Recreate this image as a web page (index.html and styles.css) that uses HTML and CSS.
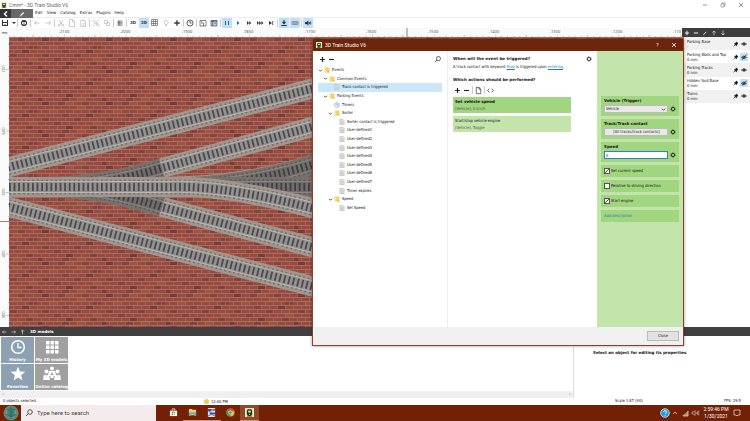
FILE: index.html
```html
<!DOCTYPE html>
<html lang="en">
<head>
<meta charset="utf-8">
<title>3D Train Studio V6</title>
<link rel="stylesheet" href="styles.css">
</head>
<body>
<svg class="defs" aria-hidden="true">
  <symbol id="i-plus" viewBox="0 0 10 10"><path d="M5 2.300v5.400M2.300 5h5.400" stroke-width="1.300"/></symbol>
  <symbol id="i-minus" viewBox="0 0 10 10"><path d="M2.300 5h5.400" stroke-width="1.300"/></symbol>
  <symbol id="i-pen" viewBox="0 0 10 10"><path d="M3.500 6.700L6.700 3.500" stroke-width="1.200"/><path d="M3 7.500l.7-1"/></symbol>
  <symbol id="i-left" viewBox="0 0 10 10"><path d="M7.500 5H2.500M4.300 3.200L2.500 5l1.800 1.800"/></symbol>
  <symbol id="i-right" viewBox="0 0 10 10"><path d="M2.500 5h5M5.700 3.200L7.500 5 5.700 6.800"/></symbol>
  <symbol id="i-up" viewBox="0 0 10 10"><path d="M5 8V2.500M3 4.500l2-2 2 2"/></symbol>
  <symbol id="i-down" viewBox="0 0 10 10"><path d="M5 2v5.500M3 5.500l2 2 2-2"/></symbol>
  <symbol id="i-x" viewBox="0 0 10 10"><path d="M3 3l4 4M7 3L3 7"/></symbol>
  <symbol id="i-gear" viewBox="0 0 10 10"><circle cx="5" cy="5" r="2.700" stroke-width="1.300"/><circle cx="5" cy="5" r="3.900" stroke-width=".9" stroke-dasharray="1.500 1.560"/></symbol>
  <symbol id="i-search" viewBox="0 0 10 10"><circle cx="6" cy="4" r="2.300"/><path d="M4.300 5.700L2 8"/></symbol>
  <symbol id="i-clock" viewBox="0 0 10 10"><circle cx="5" cy="5" r="3"/><path d="M5 3v2h1.600"/></symbol>
  <symbol id="i-grid" viewBox="0 0 10 10"><path d="M1.500 1.500h6v6h-6zM3.500 1.500v6M5.500 1.500v6M1.500 3.500h6M1.500 5.500h6" stroke="#777" stroke-width=".8"/></symbol>
  <symbol id="i-doc" viewBox="0 0 10 10"><path d="M2.500 1.500h3l2 2v5h-5zM5.500 1.500v2h2" stroke-width=".7"/></symbol>
  <symbol id="i-folder" viewBox="0 0 10 10"><path d="M1 1h7l1 1v7H1z" fill="#f5d269" stroke="none"/><path d="M1 1h2v8H1z" fill="#fbe7a0" stroke="none"/><path d="M6 7h3v2H6z" fill="#e6b845" stroke="none"/></symbol>
  <symbol id="i-file" viewBox="0 0 10 10"><path d="M1.500.500h5l2 2v7h-7z" fill="#e4e4e4" stroke="#a3a8a8" stroke-width=".8"/><path d="M3 4h4M3 6h4M3 8h4" stroke="#aaa" stroke-width=".6"/></symbol>
  <symbol id="i-caret" viewBox="0 0 10 10"><path d="M2 3.500l3 3 3-3" stroke-width="1.400"/></symbol>
  <symbol id="i-pin" viewBox="0 0 10 10"><path d="M5.500 2.500l2 2-1.500 1-.5 1.700L3 4.800l1.500-.6z" fill="currentColor"/><path d="M4 6L2 8"/></symbol>
  <symbol id="i-eye" viewBox="0 0 10 10"><path d="M1.700 5q3.300-3.600 6.600 0Q5 8.600 1.700 5z"/><circle cx="5" cy="5" r="1" fill="currentColor"/></symbol>
  <symbol id="i-hidden" viewBox="0 0 10 10"><path d="M1.700 5.500q3-3.600 6.300 0Q5 8.600 1.700 5.500zM2.500 8.500L8 2"/><circle cx="5" cy="5.500" r="1"/></symbol>
  <symbol id="i-app" viewBox="0 0 10 10"><path d="M0 0h10v10H0z" fill="#e3efb8" stroke="none"/><path d="M3 1.500h4L8 3v4L7 8l1 1.500H2L3 8 2 7V3z" fill="#26331d" stroke="none"/><path d="M3.500 3h3v2h-3z" fill="#dfe9bd" stroke="none"/><circle cx="5" cy="7" r=".7" fill="#e7d762" stroke="none"/></symbol>
</svg>

<header class="titlebar">
  <svg class="app-icon"><use href="#i-app"/></svg>
  <span class="grow">Cmm* - 3D Train Studio V6</span>
  <button class="win" aria-label="Minimize"><svg viewBox="0 0 10 10"><path d="M3 5h4"/></svg></button>
  <button class="win" aria-label="Restore"><svg viewBox="0 0 10 10"><path d="M3 4h3v3H3zM4 4V3h3v3H6" stroke-width=".6"/></svg></button>
  <button class="win" aria-label="Close window"><svg><use href="#i-x"/></svg></button>
</header>

<nav class="menubar">
  <button class="back" aria-label="Back"><svg viewBox="0 0 10 10"><path d="M6 2.500L3.500 5 6 7.500" stroke-width="1.400"/></svg></button>
  <button class="mode" aria-label="Edit mode"><svg><use href="#i-pen"/></svg></button>
  <div class="menus"><button>Edit</button><button>View</button><button>Catalog</button><button>Extras</button><button>Plugins</button><button>Help</button></div>
</nav>

<div class="toolbar">
  <button aria-label="Save"><svg viewBox="0 0 10 10"><path d="M2.500 2v5.500h5V2" stroke-width="1.100"/><path d="M3 4.500h4" stroke-width="1"/><path d="M5 6v1.500"/></svg></button>
  <button class="narrow" aria-label="Save options"><svg viewBox="0 0 10 10"><path d="M3 4l2 2 2-2z" fill="currentColor" stroke="none"/></svg></button>
  <i></i>
  <button aria-label="Publish"><svg viewBox="0 0 10 10"><circle cx="5" cy="5" r="2.700" stroke-width="1"/><path d="M3 3.600h4" stroke-width="1.200"/><path d="M3.800 7.500V6h2.400v1.500"/></svg></button>
  <i></i>
  <button class="off" aria-label="Undo"><svg><use href="#i-left"/></svg></button>
  <button class="off" aria-label="Redo"><svg><use href="#i-right"/></svg></button>
  <i></i>
  <button class="off" aria-label="Cut"><svg viewBox="0 0 10 10"><path d="M3 2l3.500 5M7 2L3.500 7"/><circle cx="3" cy="7.300" r=".8"/><circle cx="7" cy="7.300" r=".8"/></svg></button>
  <button class="off" aria-label="Copy"><svg><use href="#i-doc"/></svg></button>
  <button class="off" aria-label="Paste"><svg viewBox="0 0 10 10"><path d="M2.500 2.500h5v6h-5zM4 2h2M5 5h2.500v3H5z" stroke-width=".6"/></svg></button>
  <i></i>
  <button class="off" aria-label="Group"><svg viewBox="0 0 10 10"><path d="M2 3.500V2h1.500M6.500 2H8v1.500M8 6.500V8H6.500M3.500 8H2V6.500M3.500 3.500h2v2h-2zM5 5h2v2H5z" stroke-width=".6"/></svg></button>
  <button class="off" aria-label="Ungroup"><svg viewBox="0 0 10 10"><path d="M2.500 2.500h3v3h-3zM4.500 4.500h3v3h-3z" stroke-width=".7"/></svg></button>
  <i></i>
  <button aria-label="List"><svg viewBox="0 0 10 10"><path d="M2.500 3h5M2.500 4.400h5M2.500 5.800h5M2.500 7.200h5M4 2.800v4.600" stroke-width=".6"/></svg></button>
  <i></i>
  <button>3D</button>
  <button class="on">2D</button>
  <button aria-label="Grid"><svg><use href="#i-grid"/></svg></button>
  <button class="off" aria-label="Light"><svg viewBox="0 0 10 10"><path d="M4 6.500Q2.500 5 3.500 3T6.500 3 6 6.500zM4 8h2"/></svg></button>
  <button aria-label="Add"><svg><use href="#i-plus"/></svg></button>
  <i></i>
  <button aria-label="Time"><svg><use href="#i-clock"/></svg></button>
  <i></i>
  <button aria-label="Window view"><svg viewBox="0 0 10 10"><path d="M2 2.500h6v5.500H2zM3 5h2.500v3M3 3.700h1" stroke-width=".6"/></svg></button>
  <button aria-label="Panel view"><svg viewBox="0 0 10 10"><path d="M2 2.500h6v5.500H2z" fill="#b8d6df" stroke-width=".6"/><path d="M2 3.200h6M3.800 3v5M5.300 5H7" stroke-width=".6"/></svg></button>
  <i></i>
  <button class="on" aria-label="Pause"><svg viewBox="0 0 10 10"><path d="M3.500 3v4M6.500 3v4" stroke="#246a9d" stroke-width="1"/></svg></button>
  <button aria-label="Play"><svg viewBox="0 0 10 10"><path d="M4 3l2.500 2L4 7z" fill="#146bb4" stroke="none"/></svg></button>
  <button aria-label="Fast"><svg viewBox="0 0 10 10"><path d="M3 3l2 2-2 2zM5.200 3l2 2-2 2z" fill="currentColor" stroke="none"/></svg></button>
  <button aria-label="Faster"><svg viewBox="0 0 10 10"><path d="M2 3l2 2-2 2zM4.200 3l2 2-2 2zM6.400 3l2 2-2 2z" fill="currentColor" stroke="none"/></svg></button>
  <button aria-label="Skip"><svg viewBox="0 0 10 10"><path d="M3 3l3 2-3 2z" fill="currentColor" stroke="none"/><path d="M6.700 3v4"/></svg></button>
  <i></i>
  <button class="on" aria-label="Snap to ground"><svg viewBox="0 0 10 10"><path d="M5 2v3.500M3.500 4L5 5.600 6.500 4M2.300 7.500h5.400" stroke-width="1.100"/></svg></button>
  <button class="on" aria-label="Snap tracks"><svg viewBox="0 0 10 10"><path d="M2 3.500h6v3H2zM2 5h6M4 3.500v3M6 3.500v3" stroke="#6b747b" stroke-width=".6"/></svg></button>
  <i></i>
  <button class="on" aria-label="Sound"><svg viewBox="0 0 10 10"><path d="M2 4h1.500L5.500 2.500v5L3.500 6H2z" fill="currentColor" stroke="none"/><path d="M6.500 4v2M7.700 3.500v3"/></svg></button>
</div>

<main class="workspace">
  <section class="scene" aria-label="Layout">
    <div class="unit">mm</div>
    <svg class="ruler-x" preserveAspectRatio="xMinYMin slice" viewBox="9 28 673 9">
      <defs><pattern id="tx" width="61.600" height="9" patternUnits="userSpaceOnUse" x="64" y="28"><path d="M0 6v3M6.160 8v1M12.320 8v1M18.480 8v1M24.640 8v1M30.800 7v2M36.960 8v1M43.120 8v1M49.280 8v1M55.440 8v1" stroke="#888" stroke-width=".6"/></pattern></defs>
      <rect class="plain" x="9" y="28" width="673" height="9" fill="url(#tx)"/>
      <g text-anchor="middle"><text x="64" y="33">-2100</text><text x="125" y="33">-2000</text><text x="187" y="33">-1900</text><text x="248" y="33">-1800</text><text x="310" y="33">-1700</text><text x="371" y="33">-1600</text><text x="433" y="33">-1500</text><text x="494" y="33">-1400</text><text x="555" y="33">-1300</text><text x="617" y="33">-1200</text></g>
      <text x="681" y="33" text-anchor="end">-110</text>
      <path d="M407 28v9" stroke="#555" stroke-width=".7"/>
    </svg>
    <svg class="ruler-y" preserveAspectRatio="xMinYMin slice" viewBox="0 37 9 291">
      <defs><pattern id="ty" width="9" height="61.500" patternUnits="userSpaceOnUse" x="0" y="69"><path d="M6 .3h3M8 12.300h1M8 24.600h1M8 36.900h1M8 49.200h1" stroke="#888" stroke-width=".6"/></pattern></defs>
      <rect class="plain" y="37" width="9" height="291" fill="url(#ty)"/>
      <g text-anchor="middle"><text transform="translate(5 69) rotate(-90)">700</text><text transform="translate(5 131) rotate(-90)">600</text><text transform="translate(5 192) rotate(-90)">500</text><text transform="translate(5 254) rotate(-90)">400</text><text transform="translate(5 315) rotate(-90)">300</text></g>
      <path d="M0 221.500h9" stroke="#555" stroke-width=".7"/>
    </svg>
    <svg class="canvas" preserveAspectRatio="xMinYMin slice" viewBox="9 37 673 291">
      <defs>
        <pattern id="bricks" width="64" height="32" patternUnits="userSpaceOnUse" x="9" y="37">
          <rect width="64" height="32" fill="#984940"/>
          <path d="M8 0h8v4H8zM48 0h8v4h-8zM20 8h8v4h-8zM52 12h8v4h-8zM0 16h8v4H0zM32 16h8v4h-8zM16 24h8v4h-8zM44 20h8v4h-8zM52 28h8v4h-8z" fill="#86413c"/>
          <path d="M32 0h8v4h-8zM12 12h8v4h-8zM56 24h8v4h-8zM28 28h5v4h-5z" fill="#783b39"/>
          <path d="M56 0h8v4h-8zM4 4h8v4H4zM40 8h8v4h-8zM20 20h8v4h-8zM4 28h8v4H4z" fill="#a35246"/>
          <path d="M0 .5h64M0 4.500h64M0 8.500h64M0 12.500h64M0 16.500h64M0 20.500h64M0 24.500h64M0 28.500h64" stroke="#ab7c69" stroke-opacity=".75"/>
          <path d="M.5 0v32M8.500 0v32M16.500 0v32M24.500 0v32M32.500 0v32M40.500 0v32M48.500 0v32M56.500 0v32" stroke="#a87666" stroke-opacity=".6" stroke-dasharray="4 4"/>
          <path d="M4.500 4v32M12.500 4v32M20.500 4v32M28.500 4v32M36.500 4v32M44.500 4v32M52.500 4v32M60.500 4v32" stroke="#a87666" stroke-opacity=".6" stroke-dasharray="4 4"/>
        </pattern>
        <path id="t1" d="M-10 172L330 84"/>
        <path id="t2" d="M9 187H40Q100 187 162 168L330 122"/>
        <path id="t3" d="M9 187H40Q100 187 162 207L330 252"/>
        <path id="t4" d="M-10 202L330 291"/>
        <path id="t5" d="M160 187Q250 187 330 159"/>
        <path id="t6" d="M9 187H330"/>
        <path id="t7" d="M9 187H170Q230 185 330 213"/>
        <g id="k1"><use href="#t1" class="ballast"/><use href="#t1" class="bolts"/><use href="#t1" class="rail"/><use href="#t1" class="bed"/><use href="#t1" class="ties"/></g>
        <g id="k2"><use href="#t2" class="ballast"/><use href="#t2" class="bolts"/><use href="#t2" class="rail"/><use href="#t2" class="bed"/><use href="#t2" class="ties"/></g>
        <g id="k3"><use href="#t3" class="ballast"/><use href="#t3" class="bolts"/><use href="#t3" class="rail"/><use href="#t3" class="bed"/><use href="#t3" class="ties"/></g>
        <g id="k4"><use href="#t4" class="ballast"/><use href="#t4" class="bolts"/><use href="#t4" class="rail"/><use href="#t4" class="bed"/><use href="#t4" class="ties"/></g>
        <g id="k5"><use href="#t5" class="ballast"/><use href="#t5" class="bolts"/><use href="#t5" class="rail"/><use href="#t5" class="bed"/><use href="#t5" class="ties"/></g>
        <g id="k6"><use href="#t6" class="ballast"/><use href="#t6" class="bolts"/><use href="#t6" class="rail"/><use href="#t6" class="bed"/><use href="#t6" class="ties"/></g>
        <g id="k7"><use href="#t7" class="ballast"/><use href="#t7" class="bolts"/><use href="#t7" class="rail"/><use href="#t7" class="bed"/><use href="#t7" class="ties"/></g>
      </defs>
      <rect x="9" y="37" width="673" height="291" fill="url(#bricks)"/>
      <use href="#k1"/><use href="#k4"/><use href="#k2"/><use href="#k3"/>
      <path d="M40 187Q100 187 162 168M40 187Q100 187 162 207" class="shade"/>
      <use href="#k5"/><use href="#k6"/>
      <path d="M190 187Q260 184 330 159M240 187H330" class="shade"/>
      <use href="#k7"/>
    </svg>
  </section>
  <aside class="layers">
    <div class="layer-tools">
      <button aria-label="Add layer"><svg><use href="#i-plus"/></svg></button><button aria-label="Remove layer"><svg><use href="#i-minus"/></svg></button><button aria-label="Edit layer"><svg><use href="#i-pen"/></svg></button><button aria-label="Move up"><svg><use href="#i-up"/></svg></button><button aria-label="Move down"><svg><use href="#i-down"/></svg></button>
    </div>
    <ul>
      <li class="rose"><span>Parking Base<br>-</span><svg><use href="#i-pin"/></svg><svg><use href="#i-eye"/></svg></li>
      <li class="red"><span>Parking Walls and Top<br>0 mm</span><svg><use href="#i-pin"/></svg><svg class="on"><use href="#i-hidden"/></svg></li>
      <li class="blue"><span>Parking Tracks<br>0 mm</span><svg><use href="#i-pin"/></svg><svg><use href="#i-eye"/></svg></li>
      <li class="brown"><span>Hidden Yard Base<br>0 mm</span><svg><use href="#i-pin"/></svg><svg class="on"><use href="#i-hidden"/></svg></li>
      <li><span>Trains<br>0 mm</span><svg><use href="#i-pin"/></svg><svg><use href="#i-eye"/></svg></li>
    </ul>
  </aside>
</main>

<div class="panel-head">
  <svg><use href="#i-left"/></svg><svg><use href="#i-right"/></svg><svg><use href="#i-up"/></svg><b>3D models</b>
</div>
<div class="bottom">
  <section class="models">
    <div class="tiles">
      <button class="tile steel"><svg viewBox="0 0 20 20"><circle cx="10" cy="10" r="6.300" stroke-width="1.600"/><path d="M10 6v4.500h3.500" stroke-width="1.300"/></svg>History</button>
      <button class="tile"><svg viewBox="0 0 20 20"><path d="M4 4h3.500v3.500H4zM8.500 4H12v3.500H8.500zM13 4h3.500v3.500H13zM4 8.500h3.500V12H4zM8.500 8.500H12V12H8.500zM13 8.500h3.500V12H13zM4 13h3.500v3.500H4zM8.500 13H12v3.500H8.500zM13 13h3.500v3.500H13z" fill="#fff" stroke="none"/></svg>My 3D models</button>
      <button class="tile steel"><svg viewBox="0 0 20 20"><path d="M10 2.500l1.900 5.100 5.400.2-4.200 3.400 1.400 5.200L10 13.400l-4.500 3 1.400-5.200-4.200-3.400 5.400-.2z" fill="#fff" stroke="none"/></svg>Favorites</button>
      <button class="tile"><svg viewBox="0 0 20 20"><g fill="#fff" stroke="none"><circle cx="10" cy="4.500" r="2"/><circle cx="4.500" cy="7.500" r="2"/><circle cx="15.500" cy="7.500" r="2"/><path d="M7 7h6l1 4-2 1-2-4-2 4-2-1zM1 16l1-5.500 2.500 1 2.500-1L8 16zM12 16l1-5.500 2.500 1 2.500-1L19 16zM8.500 11h3v3h-3z"/></g></svg>Online catalog</button>
    </div>
    <div class="scroll"><span>‹</span><span>›</span></div>
  </section>
  <section class="props"><b>Select an object for editing its properties</b></section>
</div>
<footer class="status"><span>0 objects selected</span><span class="time"><i></i>12:00 PM</span><span>Scale 1:87 (H0)</span><span class="fps">FPS: 29.5</span></footer>

<div class="taskbar">
  <button class="start" aria-label="Start"><svg viewBox="0 0 16 16"><circle cx="8" cy="8" r="7" fill="#3f8c91" stroke="#a29263"/><circle cx="8" cy="8" r="4.500" fill="#4d7c65" stroke="#82bcc0" stroke-width=".7"/><path d="M4 5q4-3 8 0M3 9q5 5 10 0M8 2v12" stroke="#205d6b"/></svg></button>
  <label class="search"><svg><use href="#i-search"/></svg><input type="text" placeholder="Type here to search" aria-label="Search"></label>
  <div class="apps">
    <button aria-label="Store"><svg viewBox="0 0 10 10"><path d="M1 3h8v6H1z" fill="#fff" stroke="none"/><path d="M3.500 3V1h3v2" stroke="#fff"/><path d="M3 4h1.700v1.700H3z" fill="#e04b2b" stroke="none"/><path d="M5.200 4h1.700v1.700H5.200z" fill="#6caa32" stroke="none"/><path d="M3 6.200h1.700v1.700H3z" fill="#2b8fd5" stroke="none"/><path d="M5.200 6.200h1.700v1.700H5.200z" fill="#ecb62b" stroke="none"/></svg></button>
    <button class="open" aria-label="Explorer"><svg viewBox="0 0 10 10"><path d="M1 1h3l1 1h4v6H1z" fill="#f5cd54" stroke="none"/><path d="M1 5h8v4H7V7H3v2H1z" fill="#5aa7ce" stroke="none"/></svg></button>
    <button class="open" aria-label="Track planner"><svg viewBox="0 0 10 10"><path d="M1 0h8v10H1z" fill="#dde6f5" stroke="none"/><path d="M1 1h4v3H1zM3 5h6v2H3z" fill="#2e4e9a" stroke="none"/><path d="M1 9l4-2 4 2" stroke="#364873"/><path d="M6 1h3v2H6z" fill="#b94948" stroke="none"/></svg></button>
    <button aria-label="Browser"><svg viewBox="0 0 10 10"><circle cx="5" cy="5" r="4.500" fill="#e3b62e" stroke="none"/><path d="M1.100 2.700A4.500 4.500 0 0 1 9 3L5 5z" fill="#d94535" stroke="none"/><path d="M1.100 2.700A4.500 4.500 0 0 0 4.500 9.500L6 6 3 5z" fill="#3d9a4a" stroke="none"/><circle cx="5" cy="5" r="1.900" fill="#3e80d7" stroke="#fff" stroke-width=".7"/></svg></button>
    <button class="open current" aria-label="3D Train Studio"><svg><use href="#i-app"/></svg></button>
  </div>
  <div class="tray">
    <svg viewBox="0 0 10 10"><circle cx="5" cy="5" r="4.300" fill="#279bd5" stroke="#d7f1ff"/><path d="M3.700 4q0-1.500 1.400-1.500T6.400 4 5.100 5.700M5.100 7v.8" stroke="#fff"/></svg>
    <svg viewBox="0 0 10 10"><path d="M3 6l2-2 2 2"/></svg>
    <svg viewBox="0 0 10 10"><path d="M2 8l6-5v5z" fill="#b78875" stroke="none"/><path d="M3 8h5V3"/></svg>
    <svg viewBox="0 0 10 10"><path d="M2 4h1.500L5 2.500v5L3.500 6H2zM6.200 4v2M7.500 3.200v3.600M8.800 2.500v5" stroke-width=".6"/></svg>
    <time>2:59:46 PM<br>1/30/2021</time>
    <svg viewBox="0 0 10 10"><path d="M2 2h6v5H6L5 8 4 7H2z"/></svg>
  </div>
</div>

<section class="dialog" role="dialog" aria-label="Events">
  <header class="dialog-title"><svg class="app-icon"><use href="#i-app"/></svg><span class="grow">3D Train Studio V6</span><button aria-label="Help">?</button><button aria-label="Close dialog"><svg><use href="#i-x"/></svg></button></header>
  <div class="dialog-body">
    <div class="tree-pane">
      <div class="tools"><button aria-label="Add event"><svg><use href="#i-plus"/></svg></button><button aria-label="Remove event"><svg><use href="#i-minus"/></svg></button><button class="push" aria-label="Find"><svg><use href="#i-search"/></svg></button></div>
      <ul class="tree">
        <li><svg class="c"><use href="#i-caret"/></svg><svg><use href="#i-folder"/></svg>Events</li>
        <li class="l1"><svg class="c"><use href="#i-caret"/></svg><svg><use href="#i-folder"/></svg>Common Events</li>
        <li class="l2 selected"><svg class="c"></svg><svg><use href="#i-file"/></svg>Track contact is triggered</li>
        <li class="l1"><svg class="c"><use href="#i-caret"/></svg><svg><use href="#i-folder"/></svg>Parking Events</li>
        <li class="l2"><svg class="c"></svg><svg viewBox="0 0 10 10"><circle cx="5" cy="5" r="4" fill="#e7f2ff" stroke="#5c91cc"/><path d="M5 2.500V5h2" stroke="#356499"/></svg>Timers</li>
        <li class="l2"><svg class="c"><use href="#i-caret"/></svg><svg><use href="#i-folder"/></svg>Sorter</li>
        <li class="l3"><svg class="c"></svg><svg><use href="#i-file"/></svg>Sorter contact is triggered</li>
        <li class="l3"><svg class="c"></svg><svg><use href="#i-file"/></svg>User-defined1</li>
        <li class="l3"><svg class="c"></svg><svg><use href="#i-file"/></svg>User-defined2</li>
        <li class="l3"><svg class="c"></svg><svg><use href="#i-file"/></svg>User-defined3</li>
        <li class="l3"><svg class="c"></svg><svg><use href="#i-file"/></svg>User-defined4</li>
        <li class="l3"><svg class="c"></svg><svg><use href="#i-file"/></svg>User-defined5</li>
        <li class="l3"><svg class="c"></svg><svg><use href="#i-file"/></svg>User-defined6</li>
        <li class="l3"><svg class="c"></svg><svg><use href="#i-file"/></svg>User-defined7</li>
        <li class="l3"><svg class="c"></svg><svg><use href="#i-file"/></svg>Timer expires</li>
        <li class="l2"><svg class="c"><use href="#i-caret"/></svg><svg><use href="#i-folder"/></svg>Speed</li>
        <li class="l3"><svg class="c"></svg><svg><use href="#i-file"/></svg>Set Speed</li>
      </ul>
    </div>
    <div class="event-pane">
      <div class="question"><h2>When will the event be triggered?</h2><button aria-label="Event settings"><svg><use href="#i-gear"/></svg></button></div>
      <p>A track contact with keyword <a href="#stop">Stop</a> is triggered upon <a href="#entering">entering</a>.</p>
      <h2 class="second">Which actions should be performed?</h2>
      <div class="tools"><button aria-label="Add action"><svg><use href="#i-plus"/></svg></button><button aria-label="Remove action"><svg><use href="#i-minus"/></svg></button><i></i><button aria-label="Copy action"><svg><use href="#i-doc"/></svg></button><i></i><button aria-label="Script"><svg viewBox="0 0 10 10"><path d="M3.700 3l-2 2 2 2M6.300 3l2 2-2 2"/></svg></button></div>
      <div class="action chosen"><b>Set vehicle speed</b><span>[Vehicle], 0 km/h</span></div>
      <div class="action"><strong>Start/stop vehicle engine</strong><span>[Vehicle], Toggle</span></div>
    </div>
    <form class="settings">
      <div class="field"><label for="vehicle">Vehicle (Trigger)</label><div><span class="drop"><select id="vehicle"><option>Vehicle</option></select><svg><use href="#i-caret"/></svg></span><button type="button" aria-label="Vehicle settings"><svg><use href="#i-gear"/></svg></button></div></div>
      <div class="field"><label for="contact">Track/Track contact</label><div><button type="button" id="contact" class="pick">[All tracks/track contacts]</button><button type="button" aria-label="Contact settings"><svg><use href="#i-gear"/></svg></button></div></div>
      <div class="field"><label for="speed">Speed</label><div><input type="text" id="speed" value="0"><button type="button" aria-label="Speed settings"><svg><use href="#i-gear"/></svg></button></div></div>
      <label class="check"><input type="checkbox" checked>Set current speed</label>
      <label class="check"><input type="checkbox">Relative to driving direction</label>
      <label class="check"><input type="checkbox" checked>Start engine</label>
      <div class="check"><a href="#description">Add description</a></div>
    </form>
  </div>
  <footer class="dialog-foot"><button>Close</button></footer>
</section>
</body>
</html>
```
FILE: styles.css
```css
* { box-sizing: border-box; }
html, body { height: 100%; }
body {
  margin: 0;
  display: flex;
  flex-direction: column;
  position: relative;
  overflow: hidden;
  background: #fff;
  color: #111;
  font: 4px/6px "DejaVu Sans Condensed", "DejaVu Sans", sans-serif;
}
button, input, select { font: inherit; color: inherit; margin: 0; padding: 0; border: 0; background: none; }
button { display: flex; align-items: center; justify-content: center; }
ul, p, h2 { margin: 0; padding: 0; list-style: none; }
h2, b, .field label { font: bold 4px/6px "DejaVu Sans", sans-serif; }
svg { display: block; width: 10px; height: 10px; flex: none; fill: none; stroke: currentColor; stroke-width: .8; }
svg text { font: 4px "Noto Sans", sans-serif; fill: #555; stroke: none; }
a { color: #287cb5; }
.defs { position: absolute; width: 0; height: 0; }
.grow { flex: 1; }
.app-icon { width: 6px; height: 6px; }

.titlebar { display: flex; align-items: center; height: 9px; gap: 2px; padding: 0 1px; color: #666; font: 5px/6px Roboto, sans-serif; }
.win { width: 16px; color: #777; }

.menubar { display: flex; height: 9px; flex: none; }
.back { width: 11px; background: #353535; color: #fff; }
.mode { width: 22px; background: #686868; color: #fff; }
.menus { display: flex; flex: 1; gap: 4px; padding-left: 2px; border-bottom: 1px solid #eee; font: 4px/6px "DejaVu Sans", sans-serif; }

.toolbar { display: flex; align-items: center; gap: 1px; height: 10px; flex: none; font: bold 4px/6px "DejaVu Sans", sans-serif; }
.toolbar button { width: 10px; height: 10px; color: #333; }
.toolbar .narrow { width: 5px; overflow: hidden; }
.toolbar .off { color: #bbb; }
.toolbar .on, .layers .on { background: #bfe0f8; }
.toolbar > i, .tools > i { width: 1px; height: 8px; background: #ccc; }

.workspace { display: flex; flex: 1; min-height: 0; }
.scene { flex: 1; min-width: 0; display: grid; grid-template: 9px minmax(0, 1fr) / 9px minmax(0, 1fr); background: #fafafa; }
.unit { text-align: center; line-height: 10px; font-family: "Noto Sans", sans-serif; font-size: 3px; }
.ruler-x, .ruler-y, .canvas { width: 100%; height: 100%; overflow: hidden; }
.canvas, .plain { stroke: none; stroke-width: 1; }
.ballast { stroke: #a0968e; stroke-width: 20; }
.bolts { stroke: #77706d; stroke-width: 15; stroke-dasharray: 2 2.6; }
.rail { stroke: #bab7b2; stroke-width: 12; }
.bed { stroke: #949291; stroke-width: 10; }
.ties { stroke: #4b494b; stroke-width: 8; stroke-dasharray: 1.8 2.8; }
.shade { stroke: #2d2a2a; stroke-opacity: .35; stroke-width: 20; }

.layers { width: 68px; background: #fff; }
.layer-tools { display: flex; height: 9px; background: #3d3d3d; color: #eee; }
.layer-tools button { width: 9px; }
.layer-tools svg { width: 8px; height: 8px; }
.layers ul { display: grid; grid-auto-rows: 1fr; height: 66px; }
.layers li { display: flex; align-items: center; padding-right: 2px; border-left: 2px solid #eee; line-height: 5px; }
.layers li span { flex: 1; padding-left: 3px; white-space: nowrap; }
.layers li svg { width: 8px; height: 8px; }
.layers li:nth-child(odd) { background: #f1f1f1; }
.layers .rose { border-color: #dd5d5d; }
.layers .red { border-color: #b22c2c; }
.layers .blue { border-color: #7195a5; }
.layers .brown { border-color: #744f4a; }

.panel-head { display: flex; align-items: center; height: 9px; flex: none; background: #404040; color: #ddd; }
.panel-head svg { width: 9px; height: 8px; }
.panel-head b { padding-left: 3px; color: #fff; }
.bottom { display: flex; height: 62px; flex: none; }
.models { flex: 1; border-right: 1px solid #ddd; display: flex; flex-direction: column; }
.tiles { display: grid; grid-template-columns: 33px 33px; grid-auto-rows: 26px; gap: 1px; padding: 1px; flex: 1; }
.tile { flex-direction: column; justify-content: flex-start; overflow: hidden; white-space: nowrap; background: #a0a0a0; color: #fff; font: bold 4px/5px "DejaVu Sans", sans-serif; }
.tile svg { width: 20px; height: 20px; }
.steel { background: #8ea1b3; }
.scroll { display: flex; justify-content: space-between; height: 7px; padding: 0 2px; background: #f0f0f0; color: #888; font-size: 6px; }
.props { width: 176px; padding: 14px 19px; white-space: nowrap; }
.status { display: grid; grid-template-columns: 201px 1fr 109px 26px; height: 7px; flex: none; padding-left: 3px; }
.status .time { display: flex; align-items: center; gap: 2px; }
.time i { width: 5px; height: 5px; border-radius: 50%; background: #eec85a; }

.taskbar { display: flex; height: 16px; flex: none; background: #722006; color: #fff; }
.start { width: 21px; }
.start svg { width: 16px; height: 16px; }
.search { display: flex; align-items: center; width: 135px; padding-left: 3px; background: #f4ecec; color: #333; }
.search input { flex: 1; min-width: 0; padding-left: 3px; outline: 0; font: 6px/8px Roboto, sans-serif; }
.search input::placeholder { color: #444; opacity: 1; }
.apps { display: flex; padding-left: 8px; flex: 1; }
.apps button { width: 19px; border-bottom: 1px solid transparent; }
.apps .open { border-color: #dc936f; }
.apps .current { background: #92462c; }
.apps svg { width: 9px; height: 9px; }
.tray { display: flex; align-items: center; padding-right: 8px; color: #e2cfc7; }
.tray time { width: 32px; text-align: center; color: #fff; font: 5px/7px Roboto, sans-serif; }

.dialog { position: absolute; left: 41.600%; right: 8.800%; top: 39px; bottom: 75px; display: flex; flex-direction: column; border: 1px solid #8e3e2a; border-top: 0; background: #fff; box-shadow: 0 0 3px #0006; }
.dialog-title { display: flex; align-items: center; height: 12px; flex: none; gap: 3px; padding: 0 3px; background: #6c240b; color: #fff; font: 5px/6px Roboto, sans-serif; }
.dialog-title button { width: 13px; }
.dialog-body { flex: 1; min-height: 0; display: grid; grid-template-columns: 135px 1fr 86px; }
.tree-pane { padding: 3px 5px; border-right: 1px solid #eee; }
.tools { display: flex; align-items: center; height: 10px; }
.tools button { width: 9px; color: #222; }
.tools svg { width: 9px; height: 9px; }
.tools i { margin: 0 1px; }
.tools .push { margin-left: auto; }
.tree { display: grid; grid-auto-rows: 1fr; height: 146px; margin-top: 2px; }
.tree li { display: flex; align-items: center; gap: 1px; white-space: nowrap; }
.tree svg { width: 6px; height: 6px; }
.tree .c { width: 5px; height: 5px; }
.tree svg + svg { margin-right: 1px; }
.tree .l1 { padding-left: 5px; }
.tree .l2 { padding-left: 10px; }
.tree .l3 { padding-left: 15px; }
.tree .selected { background: #cce6fb; }
.event-pane { padding: 5px; }
.question { display: flex; justify-content: space-between; height: 6px; }
.question svg { width: 6px; height: 6px; }
.event-pane p { line-height: 9px; white-space: nowrap; }
.second { margin-top: 6px; }
.event-pane .tools { margin: 2px 0; }
.action { display: flex; flex-direction: column; justify-content: center; width: 118px; height: 16px; margin-bottom: 3px; padding: 0 2px; line-height: 7px; background: #c3e4ab; }
.action strong { font-weight: 400; }
.action span { color: #555; }
.chosen { background: #a2d580; }
.settings { display: flex; flex-direction: column; gap: 3px; padding: 45px 4px 0; background: #c3e4ab; }
.field, .check { padding: 1px 3px; background: #a2d580; }
.field { height: 20px; }
.field label { display: block; line-height: 8px; }
.field > div { display: flex; align-items: center; gap: 2px; height: 8px; }
.field svg { width: 6px; height: 6px; }
.drop { display: grid; flex: 1; }
.drop > * { grid-area: 1 / 1; }
.drop svg { width: 5px; height: 5px; margin-right: 2px; justify-self: end; align-self: center; pointer-events: none; z-index: 1; }
.field select, .field input, .pick { flex: 1; min-width: 0; height: 8px; padding-left: 1px; border: 1px solid #bbb; background: #e9e9e9; color: #222; appearance: none; }
.field input { border-color: #2685c8; background: #fff; }
.pick { white-space: nowrap; }
.check { display: flex; align-items: center; gap: 1px; height: 12px; }
.check input { width: 6px; height: 6px; appearance: none; border: 1px solid #555; background: #fff; }
.check input:checked { background: linear-gradient(135deg, #fff 42%, #555 42% 58%, #fff 58%); }
.check a { text-decoration: none; }
.dialog-foot { display: flex; justify-content: flex-end; align-items: center; height: 18px; flex: none; padding-right: 4px; background: #f0f0f0; }
.dialog-foot button { width: 32px; height: 10px; border: 1px solid #bbb; background: #e2e2e2; }
```
